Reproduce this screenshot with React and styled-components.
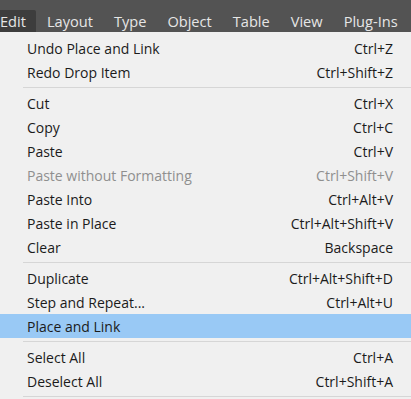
import React from "react";
import styled, { createGlobalStyle } from "styled-components";

const Global = createGlobalStyle`
  html, body { margin: 0; padding: 0; background: #f0f0f0; }
  body { font-family: "Open Sans", "Noto Sans", sans-serif; overflow: hidden; }
  * { box-sizing: border-box; }
`;

const Page = styled.div`
  width: 411px;
  height: 399px;
  overflow: hidden;
  background: #f0f0f0;
  display: flex;
  flex-direction: column;
`;

const Bar = styled.div`
  height: 32px;
  background: #535353;
  display: flex;
  align-items: flex-end;
  gap: 1px;
  padding-top: 10px;
  margin-left: -10px;
`;

const BarItem = styled.div`
  height: 22px;
  padding: 0 10px;
  display: flex;
  align-items: center;
  color: #e6e6e6;
  font-size: 14.6px;
  white-space: nowrap;
  border-radius: 2px 2px 0 0;
  background: ${(p) => (p.$active ? "#3d3d3d" : "transparent")};
`;

const Menu = styled.div`
  padding-top: 4px;
  display: flex;
  flex-direction: column;
`;

const Row = styled.div`
  height: 24px;
  display: grid;
  grid-template-columns: 1fr auto;
  align-items: center;
  padding: 0 18px 0 27px;
  font-size: 14px;
  color: ${(p) => (p.$disabled ? "#8f8f8f" : "#1b1b1b")};
  background: ${(p) => (p.$hover ? "#99c9f5" : "transparent")};
  white-space: nowrap;
`;

const Shortcut = styled.span`
  text-align: right;
`;

const Sep = styled.div`
  height: 7px;
  display: flex;
  align-items: center;
  padding-left: 23px;
  &::after {
    content: "";
    flex: 1;
    height: 1px;
    background: #d6d6d6;
  }
`;

const barItems = ["Edit", "Layout", "Type", "Object", "Table", "View", "Plug-Ins"];

const groups = [
  [
    ["Undo Place and Link", "Ctrl+Z"],
    ["Redo Drop Item", "Ctrl+Shift+Z"],
  ],
  [
    ["Cut", "Ctrl+X"],
    ["Copy", "Ctrl+C"],
    ["Paste", "Ctrl+V"],
    ["Paste without Formatting", "Ctrl+Shift+V", "disabled"],
    ["Paste Into", "Ctrl+Alt+V"],
    ["Paste in Place", "Ctrl+Alt+Shift+V"],
    ["Clear", "Backspace"],
  ],
  [
    ["Duplicate", "Ctrl+Alt+Shift+D"],
    ["Step and Repeat...", "Ctrl+Alt+U"],
    ["Place and Link", "", "hover"],
  ],
  [
    ["Select All", "Ctrl+A"],
    ["Deselect All", "Ctrl+Shift+A"],
  ],
];

export default function App() {
  return (
    <Page>
      <Global />
      <Bar>
        {barItems.map((b, i) => (
          <BarItem key={b} $active={i === 0}>
            {b}
          </BarItem>
        ))}
      </Bar>
      <Menu>
        {groups.map((g, gi) => (
          <React.Fragment key={gi}>
            {gi > 0 && <Sep />}
            {g.map(([label, sc, state]) => (
              <Row key={label} $disabled={state === "disabled"} $hover={state === "hover"}>
                <span>{label}</span>
                <Shortcut>{sc}</Shortcut>
              </Row>
            ))}
          </React.Fragment>
        ))}
        <Sep />
      </Menu>
    </Page>
  );
}
